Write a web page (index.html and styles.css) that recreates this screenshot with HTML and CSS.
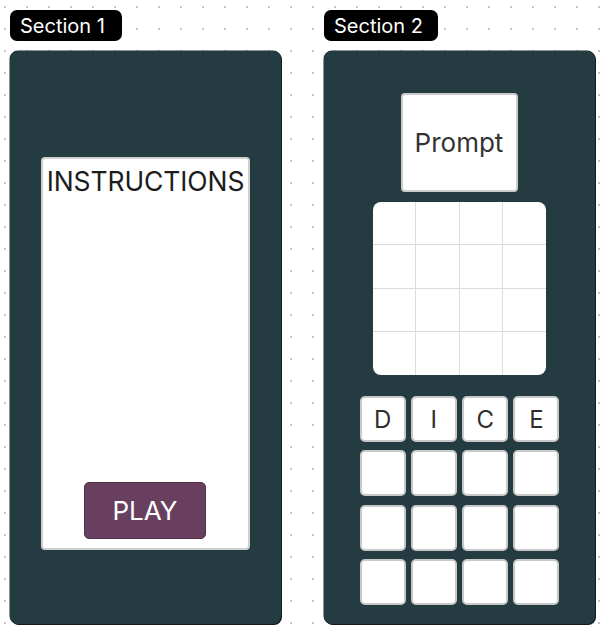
FILE: index.html
```html
<!DOCTYPE html>
<html>
<head>
<meta charset="utf-8">
<link rel="stylesheet" href="styles.css">
</head>
<body>
<div class="canvas">
  <section class="col">
    <div class="label">Section 1</div>
    <div class="panel panel-one">
      <div class="instructions">
        <div class="instr-title">INSTRUCTIONS</div>
        <button class="play">PLAY</button>
      </div>
    </div>
  </section>
  <section class="col">
    <div class="label">Section 2</div>
    <div class="panel panel-two">
      <div class="prompt">Prompt</div>
      <div class="board">
        <div class="cell"></div><div class="cell"></div><div class="cell"></div><div class="cell"></div>
        <div class="cell"></div><div class="cell"></div><div class="cell"></div><div class="cell"></div>
        <div class="cell"></div><div class="cell"></div><div class="cell"></div><div class="cell"></div>
        <div class="cell"></div><div class="cell"></div><div class="cell"></div><div class="cell"></div>
      </div>
      <div class="tiles">
        <div class="tile">D</div><div class="tile">I</div><div class="tile">C</div><div class="tile">E</div>
        <div class="tile"></div><div class="tile"></div><div class="tile"></div><div class="tile"></div>
        <div class="tile"></div><div class="tile"></div><div class="tile"></div><div class="tile"></div>
        <div class="tile"></div><div class="tile"></div><div class="tile"></div><div class="tile"></div>
      </div>
    </div>
  </section>
</div>
</body>
</html>
```

FILE: styles.css
```css
* { box-sizing: border-box; }
html, body {
  margin: 0;
  padding: 0;
  width: 602px;
  height: 633px;
  overflow: hidden;
  font-family: Inter, "Noto Sans", sans-serif;
  background-color: #ffffff;
  background-image: radial-gradient(circle at 1px 1px, #c4c4c4 0.9px, transparent 1.1px);
  background-size: 22px 22px;
  background-position: 4px 6px;
}
.canvas {
  display: flex;
  gap: 43px;
  padding: 10px 0 0 10px;
}
.col {
  display: flex;
  flex-direction: column;
  align-items: flex-start;
  gap: 10px;
  width: 271px;
}
.label {
  background: #000;
  color: #fff;
  font-size: 20px;
  font-weight: 400;
  line-height: 32px;
  height: 31px;
  padding: 0 10px;
  border-radius: 7px;
  white-space: nowrap;
}
.col:first-child .label { width: 112px; }
.col:last-child .label { width: 114px; }
.panel {
  width: 271px;
  height: 573px;
  background: #243b42;
  border-radius: 8px;
  box-shadow: 1px 1px 0 #111a1d, 0 0 0 0.5px #1b2c31;
}
.panel-one {
  padding: 106px 31px 0 31px;
}
.instructions {
  width: 209px;
  height: 393px;
  background: #fff;
  border: 2px solid #cfcfcf;
  border-radius: 4px;
  display: flex;
  flex-direction: column;
  align-items: center;
  justify-content: space-between;
  padding: 5px 0 9px;
}
.instr-title {
  font-size: 26.5px;
  line-height: 34px;
  color: #1c1c1c;
  letter-spacing: -0.1px;
}
.play {
  width: 122px;
  height: 57px;
  background: #693f5f;
  border: 1px solid #52304a;
  border-radius: 5px;
  color: #fff;
  font-family: Inter, "Noto Sans", sans-serif;
  font-size: 26px;
  padding: 0;
  margin-left: -1px;
}
.panel-two {
  display: flex;
  flex-direction: column;
  align-items: center;
  padding-top: 42px;
}
.prompt {
  width: 117px;
  height: 99px;
  background: #fff;
  border: 2px solid #cbcbcb;
  border-radius: 4px;
  display: flex;
  align-items: center;
  justify-content: center;
  font-size: 26px;
  color: #333;
  margin-left: -1px;
}
.board {
  margin-top: 10px;
  width: 173px;
  height: 173px;
  background: #fff;
  border-radius: 8px;
  overflow: hidden;
  display: grid;
  grid-template-columns: repeat(4, 1fr);
  grid-template-rows: repeat(4, 1fr);
}
.cell {
  border-right: 1px solid #dcdcdc;
  border-bottom: 1px solid #dcdcdc;
}
.cell:nth-child(4n) { border-right: none; }
.cell:nth-child(n+13) { border-bottom: none; }
.tiles {
  margin-top: 21px;
  display: grid;
  grid-template-columns: repeat(4, 46px);
  grid-auto-rows: 46px;
  column-gap: 5.3px;
  row-gap: 8.3px;
}
.tile {
  background: #fff;
  border: 2px solid #c8c8c8;
  border-radius: 5px;
  display: flex;
  align-items: center;
  justify-content: center;
  font-size: 24px;
  color: #2e2e2e;
}
```
